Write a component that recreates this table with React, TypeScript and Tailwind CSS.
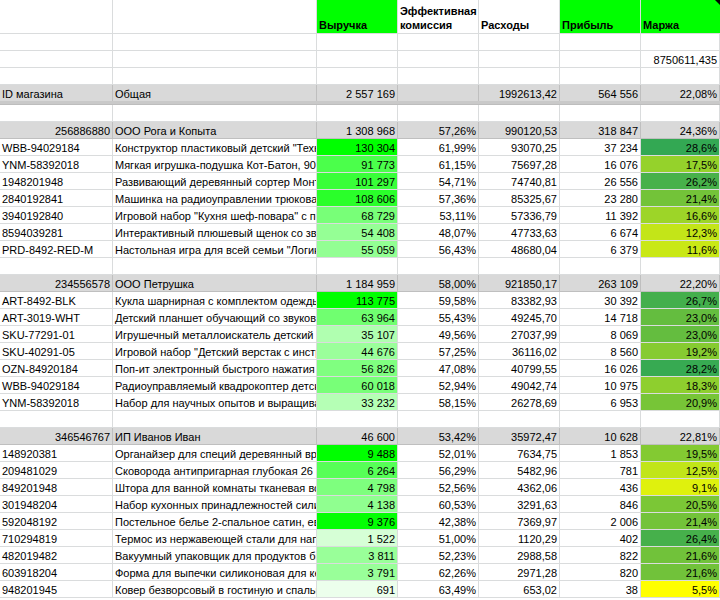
import React from "react";

type Item = [string, string, number, string, string, string, number];

interface Group {
  id: string;
  name: string;
  revenue: string;
  commission: string;
  expenses: string;
  profit: string;
  margin: string;
  items: Item[];
}

const groups: Group[] = [
  {
    id: "256886880",
    name: "ООО Рога и Копыта",
    revenue: "1 308 968",
    commission: "57,26%",
    expenses: "990120,53",
    profit: "318 847",
    margin: "24,36%",
    items: [
      ["WBB-94029184", 'Конструктор пластиковый детский "Техно', 130304, "61,99%", "93070,25", "37 234", 28.6],
      ["YNM-58392018", "Мягкая игрушка-подушка Кот-Батон, 90 см", 91773, "61,15%", "75697,28", "16 076", 17.5],
      ["1948201948", "Развивающий деревянный сортер Монтессори", 101297, "54,71%", "74740,81", "26 556", 26.2],
      ["2840192841", "Машинка на радиоуправлении трюковая", 108606, "57,36%", "85325,67", "23 280", 21.4],
      ["3940192840", 'Игровой набор "Кухня шеф-повара" с посу', 68729, "53,11%", "57336,79", "11 392", 16.6],
      ["8594039281", "Интерактивный плюшевый щенок со звуком", 54408, "48,07%", "47733,63", "6 674", 12.3],
      ["PRD-8492-RED-M", 'Настольная игра для всей семьи "Логика', 55059, "56,43%", "48680,04", "6 379", 11.6],
    ],
  },
  {
    id: "234556578",
    name: "ООО Петрушка",
    revenue: "1 184 959",
    commission: "58,00%",
    expenses: "921850,17",
    profit: "263 109",
    margin: "22,20%",
    items: [
      ["ART-8492-BLK", "Кукла шарнирная с комплектом одежды", 113775, "59,58%", "83382,93", "30 392", 26.7],
      ["ART-3019-WHT", "Детский планшет обучающий со звуковы", 63964, "55,43%", "49245,70", "14 718", 23.0],
      ["SKU-77291-01", "Игрушечный металлоискатель детский с", 35107, "49,56%", "27037,99", "8 069", 23.0],
      ["SKU-40291-05", 'Игровой набор "Детский верстак с инстр', 44676, "57,25%", "36116,02", "8 560", 19.2],
      ["OZN-84920184", 'Поп-ит электронный быстрого нажатия "', 56826, "47,08%", "40799,55", "16 026", 28.2],
      ["WBB-94029184", "Радиоуправляемый квадрокоптер детски", 60018, "52,94%", "49042,74", "10 975", 18.3],
      ["YNM-58392018", "Набор для научных опытов и выращива", 33232, "58,15%", "26278,69", "6 953", 20.9],
    ],
  },
  {
    id: "346546767",
    name: "ИП Иванов Иван",
    revenue: "46 600",
    commission: "53,42%",
    expenses: "35972,47",
    profit: "10 628",
    margin: "22,81%",
    items: [
      ["148920381", "Органайзер для специй деревянный вра", 9488, "52,01%", "7634,75", "1 853", 19.5],
      ["209481029", "Сковорода антипригарная глубокая 26 с", 6264, "56,29%", "5482,96", "781", 12.5],
      ["849201948", "Штора для ванной комнаты тканевая вод", 4798, "52,56%", "4362,06", "436", 9.1],
      ["301948204", "Набор кухонных принадлежностей сили", 4138, "60,53%", "3291,63", "846", 20.5],
      ["592048192", "Постельное белье 2-спальное сатин, евр", 9376, "42,38%", "7369,97", "2 006", 21.4],
      ["710294819", "Термос из нержавеющей стали для напи", 1522, "51,00%", "1120,29", "402", 26.4],
      ["482019482", "Вакуумный упаковщик для продуктов бы", 3811, "52,23%", "2988,58", "822", 21.6],
      ["603918204", "Форма для выпечки силиконовая для ке", 3791, "62,26%", "2971,28", "820", 21.6],
      ["948201945", "Ковер безворсовый в гостиную и спальн", 691, "63,49%", "653,02", "38", 5.5],
    ],
  },
];

function fmtInt(n: number) {
  return String(n).replace(/\B(?=(\d{3})+(?!\d))/g, " ");
}

// white -> pure green, scaled to the group's max
function revenueColor(v: number, max: number) {
  const c = Math.round(255 * (1 - v / max));
  return `rgb(${c},255,${c})`;
}

// yellow -> green over the whole margin column
function marginColor(p: number) {
  const t = Math.max(0, Math.min(1, (p - 5.5) / (28.6 - 5.5)));
  const r = Math.round(255 + (51 - 255) * t);
  const g = Math.round(255 + (168 - 255) * t);
  const b = Math.round(83 * t);
  return `rgb(${r},${g},${b})`;
}

const cell =
  "h-[17px] overflow-hidden whitespace-nowrap border-b border-r border-[#dadcdd] px-[2px] text-[11px] leading-[18px] text-black";
const grayCell =
  "h-[17px] overflow-hidden whitespace-nowrap border-b border-r border-[#bfbfbf] bg-[#d9d9d9] px-[2px] text-[11px] leading-[18px] text-black";
const headCell =
  "flex h-[34px] items-end border-b border-r border-[#dadcdd] px-[2px] pb-[1px] text-[11px] font-bold leading-[14px] text-black";

function EmptyRow() {
  return (
    <>
      {[0, 1, 2, 3, 4, 5, 6].map((i) => (
        <div key={i} className={cell} />
      ))}
    </>
  );
}

// first two columns get their own alignment, the rest are numbers
function GrayRow({ cols, firstLeft }: { cols: string[]; firstLeft?: boolean }) {
  return (
    <>
      {cols.map((c, i) => {
        const left = i === 1 || (i === 0 && firstLeft);
        return (
          <div key={i} className={`${grayCell} ${left ? "text-left" : "text-right"}`}>
            {c}
          </div>
        );
      })}
    </>
  );
}

export default function App() {
  return (
    <div className="h-[600px] w-[720px] overflow-hidden bg-white font-['Liberation_Sans',Arial,sans-serif]">
      <div className="grid w-[720px] grid-cols-[113px_204px_81px_81px_81px_81px_79px]">
        {/* header */}
        <div className="h-[34px] border-b border-r border-[#dadcdd]" />
        <div className="h-[34px] border-b border-r border-[#dadcdd]" />
        <div className={`${headCell} bg-[#00ff00]`}>Выручка</div>
        <div className={headCell}>Эффективная комиссия</div>
        <div className={headCell}>Расходы</div>
        <div className={`${headCell} bg-[#00ff00]`}>Прибыль</div>
        <div className={`${headCell} relative border-r-0 bg-[#00ff00]`}>
          Маржа
          <span className="absolute right-0 top-0 h-0 w-0 border-l-[5px] border-t-[5px] border-l-transparent border-t-black" />
        </div>

        <EmptyRow />
        {[0, 1, 2, 3, 4, 5].map((i) => (
          <div key={i} className={cell} />
        ))}
        <div className={`${cell} text-right`}>8750611,435</div>
        <EmptyRow />

        <GrayRow
          firstLeft
          cols={["ID магазина", "Общая", "2 557 169", "", "1992613,42", "564 556", "22,08%"]}
        />
        <div className="col-span-7 -mt-px h-[4px] border-b border-[#bdbdbd] bg-[#c9c9c9]" />

        {groups.map((g) => {
          const max = Math.max(...g.items.map((it) => it[2]));
          return (
            <React.Fragment key={g.id}>
              <EmptyRow />
              <GrayRow
                cols={[g.id, g.name, g.revenue, g.commission, g.expenses, g.profit, g.margin]}
              />
              {g.items.map((it, idx) => (
                <React.Fragment key={idx}>
                  <div className={cell}>{it[0]}</div>
                  <div className={cell}>{it[1]}</div>
                  <div
                    className={`${cell} text-right`}
                    style={{ backgroundColor: revenueColor(it[2], max) }}
                  >
                    {fmtInt(it[2])}
                  </div>
                  <div className={`${cell} text-right`}>{it[3]}</div>
                  <div className={`${cell} text-right`}>{it[4]}</div>
                  <div className={`${cell} text-right`}>{it[5]}</div>
                  <div
                    className={`${cell} text-right`}
                    style={{ backgroundColor: marginColor(it[6]) }}
                  >
                    {it[6].toFixed(1).replace(".", ",")}%
                  </div>
                </React.Fragment>
              ))}
            </React.Fragment>
          );
        })}
      </div>
    </div>
  );
}
